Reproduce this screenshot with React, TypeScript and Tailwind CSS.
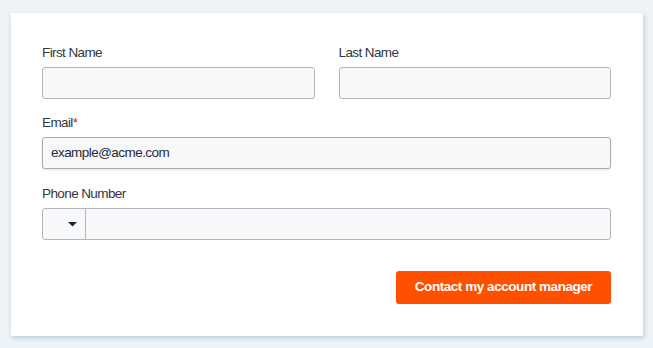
import React from "react";

const font = { fontFamily: '"Liberation Sans", Arial, Helvetica, sans-serif' };

function Label({ children, required }: { children: React.ReactNode; required?: boolean }) {
  return (
    <div className="h-5 mb-1 text-[13.5px] leading-5 text-[#2f3744] tracking-[-0.6px]">
      {children}
      {required && <span className="text-[#e0141e]">*</span>}
    </div>
  );
}

function Input({ value, strong }: { value?: string; strong?: boolean }) {
  return (
    <div
      className={
        strong
          ? "h-8 rounded-[3px] border border-[#a9abaf] bg-[#f7f8fa] shadow-[0_1px_2px_rgba(0,0,0,0.12)] flex items-center px-2 text-[13.5px] text-[#262b33] tracking-[-0.55px]"
          : "h-8 rounded-[3px] border border-[#b3b5b8] bg-[#f7f8fa] flex items-center px-2 text-[13.5px] text-[#262b33] tracking-[-0.55px]"
      }
    >
      {value}
    </div>
  );
}

export default function App() {
  return (
    <div className="min-h-[348px] w-[653px] bg-[#eef3f7] pt-[13px] pl-[11px]" style={font}>
      <div className="w-[632px] h-[323px] bg-white shadow-[1px_2px_5px_rgba(120,155,180,0.45)] pt-[30px] pl-[31px] pr-[32px] pb-[32px] flex flex-col">
        <div className="grid grid-cols-2 gap-x-6">
          <div>
            <Label>First Name</Label>
            <Input />
          </div>
          <div>
            <Label>Last Name</Label>
            <Input />
          </div>
        </div>
        <div className="mt-[14px]">
          <Label required>Email</Label>
          <Input value="example@acme.com" strong />
        </div>
        <div className="mt-[15px]">
          <Label>Phone Number</Label>
          <div className="h-8 rounded-[3px] border border-[#b3b5b8] bg-[#f7f8fa] flex">
            <div className="w-[43px] border-r border-[#b3b5b8] flex items-center justify-end pr-[8px]">
              <svg width="9" height="5" viewBox="0 0 9 5">
                <path d="M0 0 L9 0 L4.5 4.5 Z" fill="#1f2530" />
              </svg>
            </div>
            <div className="flex-1" />
          </div>
        </div>
        <div className="mt-[31px] flex justify-end">
          <button className="h-[33px] w-[215px] rounded-[3px] bg-[#ff5000] text-white font-bold text-[13.5px] tracking-[-0.45px]">
            Contact my account manager
          </button>
        </div>
      </div>
    </div>
  );
}
